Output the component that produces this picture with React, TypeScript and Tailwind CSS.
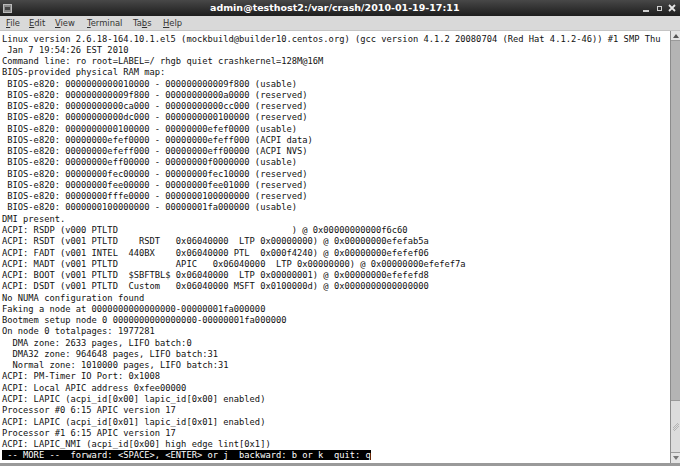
import React from "react";

const lines = [
  "Linux version 2.6.18-164.10.1.el5 (mockbuild@builder10.centos.org) (gcc version 4.1.2 20080704 (Red Hat 4.1.2-46)) #1 SMP Thu",
  " Jan 7 19:54:26 EST 2010",
  "Command line: ro root=LABEL=/ rhgb quiet crashkernel=128M@16M",
  "BIOS-provided physical RAM map:",
  " BIOS-e820: 0000000000010000 - 000000000009f800 (usable)",
  " BIOS-e820: 000000000009f800 - 00000000000a0000 (reserved)",
  " BIOS-e820: 00000000000ca000 - 00000000000cc000 (reserved)",
  " BIOS-e820: 00000000000dc000 - 0000000000100000 (reserved)",
  " BIOS-e820: 0000000000100000 - 00000000efef0000 (usable)",
  " BIOS-e820: 00000000efef0000 - 00000000efeff000 (ACPI data)",
  " BIOS-e820: 00000000efeff000 - 00000000eff00000 (ACPI NVS)",
  " BIOS-e820: 00000000eff00000 - 00000000f0000000 (usable)",
  " BIOS-e820: 00000000fec00000 - 00000000fec10000 (reserved)",
  " BIOS-e820: 00000000fee00000 - 00000000fee01000 (reserved)",
  " BIOS-e820: 00000000fffe0000 - 0000000100000000 (reserved)",
  " BIOS-e820: 0000000100000000 - 00000001fa000000 (usable)",
  "DMI present.",
  "ACPI: RSDP (v000 PTLTD                                 ) @ 0x00000000000f6c60",
  "ACPI: RSDT (v001 PTLTD    RSDT   0x06040000  LTP 0x00000000) @ 0x00000000efefab5a",
  "ACPI: FADT (v001 INTEL  440BX    0x06040000 PTL  0x000f4240) @ 0x00000000efefef06",
  "ACPI: MADT (v001 PTLTD           APIC   0x06040000  LTP 0x00000000) @ 0x00000000efefef7a",
  "ACPI: BOOT (v001 PTLTD  $SBFTBL$ 0x06040000  LTP 0x00000001) @ 0x00000000efefefd8",
  "ACPI: DSDT (v001 PTLTD  Custom   0x06040000 MSFT 0x0100000d) @ 0x0000000000000000",
  "No NUMA configuration found",
  "Faking a node at 0000000000000000-00000001fa000000",
  "Bootmem setup node 0 0000000000000000-00000001fa000000",
  "On node 0 totalpages: 1977281",
  "  DMA zone: 2633 pages, LIFO batch:0",
  "  DMA32 zone: 964648 pages, LIFO batch:31",
  "  Normal zone: 1010000 pages, LIFO batch:31",
  "ACPI: PM-Timer IO Port: 0x1008",
  "ACPI: Local APIC address 0xfee00000",
  "ACPI: LAPIC (acpi_id[0x00] lapic_id[0x00] enabled)",
  "Processor #0 6:15 APIC version 17",
  "ACPI: LAPIC (acpi_id[0x01] lapic_id[0x01] enabled)",
  "Processor #1 6:15 APIC version 17",
  "ACPI: LAPIC_NMI (acpi_id[0x00] high edge lint[0x1])",
];

// widths keep the menu labels where the reference has them
const menus = [
  { pre: "", key: "F", post: "ile", w: "w-[23px]" },
  { pre: "", key: "E", post: "dit", w: "w-[26px]" },
  { pre: "", key: "V", post: "iew", w: "w-[32px]" },
  { pre: "", key: "T", post: "erminal", w: "w-[46px]" },
  { pre: "Ta", key: "b", post: "s", w: "w-[30px]" },
  { pre: "", key: "H", post: "elp", w: "w-[30px]" },
];

const Scrollbar = () => (
  <div className="w-[10px] flex flex-col bg-[#b4b4b4] border-l border-[#8c8c8c]">
    <div className="h-[10px] bg-[#e4e4e4] border-b border-[#9a9a9a] flex items-center justify-center">
      <svg width="6" height="4" viewBox="0 0 6 4">
        <path d="M0 4 L3 0 L6 4 Z" fill="#555" />
      </svg>
    </div>
    <div className="flex-1" />
    <div className="h-[53px] bg-[#dcdcdc] border-y border-[#9a9a9a] flex items-center justify-center">
      <svg width="6" height="8" viewBox="0 0 6 8">
        <path d="M0 5 L5 0 M0 7 L6 1 M1 8 L6 3" stroke="#a8a8a8" strokeWidth="0.8" />
      </svg>
    </div>
    <div className="h-[10px] bg-[#e4e4e4] flex items-center justify-center">
      <svg width="6" height="4" viewBox="0 0 6 4">
        <path d="M0 0 L3 4 L6 0 Z" fill="#777" />
      </svg>
    </div>
  </div>
);

export default function App() {
  return (
    <div className="w-[680px] h-[466px] overflow-hidden bg-white flex flex-col">
      {/* title bar */}
      <div className="h-[16px] bg-linear-to-b from-[#484848] to-[#1e1e1e] flex items-center">
        <div className="ml-[3px] w-[9px] h-[9px] bg-[#8a8a8a] border border-[#bbb] flex items-center justify-center">
          <div className="w-[5px] h-[3px] bg-[#444]" />
        </div>
        <div className="ml-[198px] flex-1 text-white font-bold text-[9.5px] font-['DejaVu_Sans',sans-serif] leading-none">
          admin@testhost2:/var/crash/2010-01-19-17:11
        </div>
        <div className="flex items-center gap-[5px] mr-[4px]">
          <span className="w-[8px] h-[8px] flex items-end justify-center">
            <span className="w-[6px] h-[2px] bg-[#cfcfcf]" />
          </span>
          <span className="w-[8px] h-[8px] flex items-center justify-center">
            <span className="w-[5px] h-[5px] border border-[#cfcfcf]" />
          </span>
          <svg width="8" height="8" viewBox="0 0 8 8">
            <path d="M1 1 L7 7 M7 1 L1 7" stroke="#e6e6e6" strokeWidth="1.8" />
          </svg>
        </div>
      </div>

      {/* menu bar */}
      <div className="h-[15px] bg-[#d9d9d9] flex items-center pl-[6px] text-[8.4px] text-[#333] font-['DejaVu_Sans',sans-serif] border-b border-[#c4c4c4]">
        {menus.map((m) => (
          <span key={m.key + m.post} className={m.w}>
            {m.pre}
            <span className="underline">{m.key}</span>
            {m.post}
          </span>
        ))}
      </div>

      {/* terminal */}
      <div className="flex-1 flex min-h-0 border-b-[3px] border-[#9a9a9a]">
        <pre className="flex-1 pl-[2px] pt-[2.5px] text-[8.75px] leading-[11.27px] text-[#111] font-['DejaVu_Sans_Mono',monospace] overflow-hidden whitespace-pre">
          {lines.join("\n")}
          {"\n"}
          <span className="bg-black text-white">
            {" -- MORE --  forward: <SPACE>, <ENTER> or j  backward: b or k  quit: q"}
          </span>
        </pre>
        <Scrollbar />
      </div>
    </div>
  );
}
